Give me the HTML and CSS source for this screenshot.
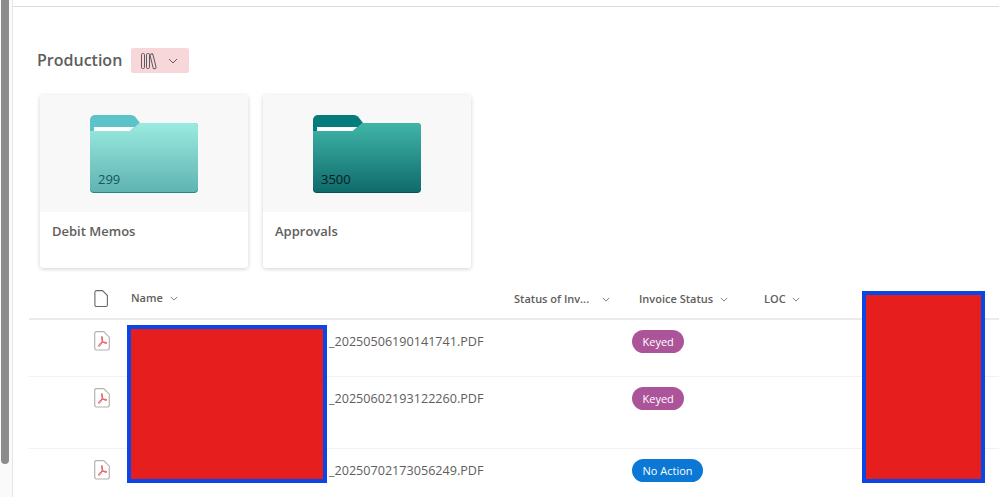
FILE: index.html
```html
<!DOCTYPE html>
<html lang="en">
<head>
    <meta charset="UTF-8">
    <meta name="viewport" content="width=device-width, initial-scale=1.0">
    <title>Production</title>
    <link rel="stylesheet" href="styles.css">
</head>
<body>
    <div class="scrollbar"><div class="scroll-thumb"></div></div>

    <div class="page">
        <div class="section-title">
            <h1>Production</h1>
            <button class="library-button">
                <svg width="18" height="18" viewBox="0 0 18 18" fill="none" stroke="#5f5b5e" stroke-width="1">
                    <rect x="1.5" y="1.5" width="3" height="15" rx="1.2"/>
                    <rect x="6.5" y="1.5" width="3" height="15" rx="1.2"/>
                    <rect x="11.5" y="1.8" width="3" height="15" rx="1.2" transform="rotate(-14 13 9)"/>
                </svg>
                <svg class="chevron" width="10" height="6" viewBox="0 0 10 6"><path d="M1 1l4 4 4-4"/></svg>
            </button>
        </div>

        <div class="cards">
            <div class="card">
                <div class="card-thumb">
                    <div class="folder folder-light">
                        <svg width="108" height="78" viewBox="0 0 108 78">
                            <defs>
                                <linearGradient id="light" x1="0" y1="0" x2="0" y2="1">
                                    <stop offset="0" stop-color="#9aebe0"/>
                                    <stop offset="1" stop-color="#5fb3b1"/>
                                </linearGradient>
                            </defs>
                            <path d="M0 17V5a5 5 0 0 1 5-5h36a6 6 0 0 1 4 1.600L50 8v9z" fill="#5cc4c8"/>
                            <rect x="4" y="12" width="44" height="8" fill="#fff"/>
                            <path d="M0 16h40l9-8h55a4 4 0 0 1 4 4v62a4 4 0 0 1-4 4H4a4 4 0 0 1-4-4z" fill="#1f8a8a"/>
                            <path d="M0 16h40l9-8h55a4 4 0 0 1 4 4v61a4 4 0 0 1-4 4H4a4 4 0 0 1-4-4z" fill="url(#light)"/>
                        </svg>
                        <span class="folder-count">299</span>
                    </div>
                </div>
                <div class="card-name">Debit Memos</div>
            </div>

            <div class="card">
                <div class="card-thumb">
                    <div class="folder folder-dark">
                        <svg width="108" height="78" viewBox="0 0 108 78">
                            <defs>
                                <linearGradient id="dark" x1="0" y1="0" x2="0" y2="1">
                                    <stop offset="0" stop-color="#40b5a8"/>
                                    <stop offset="1" stop-color="#0f6b6b"/>
                                </linearGradient>
                            </defs>
                            <path d="M0 17V5a5 5 0 0 1 5-5h36a6 6 0 0 1 4 1.600L50 8v9z" fill="#047c7c"/>
                            <rect x="4" y="12" width="44" height="8" fill="#fff"/>
                            <path d="M0 16h40l9-8h55a4 4 0 0 1 4 4v62a4 4 0 0 1-4 4H4a4 4 0 0 1-4-4z" fill="#0a4f4f"/>
                            <path d="M0 16h40l9-8h55a4 4 0 0 1 4 4v61a4 4 0 0 1-4 4H4a4 4 0 0 1-4-4z" fill="url(#dark)"/>
                        </svg>
                        <span class="folder-count">3500</span>
                    </div>
                </div>
                <div class="card-name">Approvals</div>
            </div>
        </div>

        <div class="list">
            <div class="list-row list-header">
                <div class="col-icon">
                    <svg class="file-icon" width="14" height="17" viewBox="0 0 14 17" fill="none" stroke="#6b6669" stroke-width="1.1">
                        <path d="M2.500 .6h6l4.900 4.900v9.400a1.600 1.600 0 0 1-1.600 1.600H2.500A1.600 1.600 0 0 1 .9 14.900V2.200A1.600 1.600 0 0 1 2.500 .6z"/>
                    </svg>
                </div>
                <div class="col-name">Name <svg class="chevron" width="8" height="5" viewBox="0 0 10 6"><path d="M1 1l4 4 4-4"/></svg></div>
                <div class="col-status">Status of Inv... <svg class="chevron chevron-far" width="8" height="5" viewBox="0 0 10 6"><path d="M1 1l4 4 4-4"/></svg></div>
                <div class="col-invoice">Invoice Status <svg class="chevron" width="8" height="5" viewBox="0 0 10 6"><path d="M1 1l4 4 4-4"/></svg></div>
                <div class="col-loc">LOC <svg class="chevron" width="8" height="5" viewBox="0 0 10 6"><path d="M1 1l4 4 4-4"/></svg></div>
            </div>

            <div class="list-row file-row row-short">
                <div class="col-icon"><svg class="pdf-icon" width="16" height="20" viewBox="0 0 16 20"><use href="#pdf"/></svg></div>
                <div class="col-name"><span class="file-prefix"></span>_20250506190141741.PDF</div>
                <div class="col-status"></div>
                <div class="col-invoice"><span class="pill pill-keyed">Keyed</span></div>
                <div class="col-loc"></div>
            </div>

            <div class="list-row file-row row-tall">
                <div class="col-icon"><svg class="pdf-icon" width="16" height="20" viewBox="0 0 16 20"><use href="#pdf"/></svg></div>
                <div class="col-name"><span class="file-prefix"></span>_20250602193122260.PDF</div>
                <div class="col-status"></div>
                <div class="col-invoice"><span class="pill pill-keyed">Keyed</span></div>
                <div class="col-loc"></div>
            </div>

            <div class="list-row file-row row-last">
                <div class="col-icon"><svg class="pdf-icon" width="16" height="20" viewBox="0 0 16 20"><use href="#pdf"/></svg></div>
                <div class="col-name"><span class="file-prefix"></span>_20250702173056249.PDF</div>
                <div class="col-status"></div>
                <div class="col-invoice"><span class="pill pill-action">No Action</span></div>
                <div class="col-loc"></div>
            </div>
        </div>
    </div>

    <!-- redaction boxes painted over the screenshot -->
    <div class="redact redact-name"></div>
    <div class="redact redact-col"></div>

    <svg class="icon-defs" width="0" height="0">
        <symbol id="pdf" viewBox="0 0 16 20">
            <path d="M2.200 .7h7.600l5.500 5.500v10.900a1.900 1.900 0 0 1-1.900 1.900H2.200A1.900 1.900 0 0 1 .7 17.100V2.600A1.900 1.900 0 0 1 2.200 .7z" fill="#fff" stroke="#b5b2b0" stroke-width="1.2"/>
            <path d="M8 5.500c-.9 0 0 3.200 1 5 1 1.500 3.500 2.600 3.800 1.500.3-1-2.800-1-5.300-.2-1.800.6-3.500 2.800-2.800 3.500.8.700 2.200-1.800 3-3.800.5-1.500 1-6 .3-6z" fill="none" stroke="#e8494f" stroke-width="1"/>
        </symbol>
    </svg>
</body>
</html>
```

FILE: styles.css
```css
* {
    margin: 0;
    padding: 0;
    box-sizing: border-box;
    font-family: "Open Sans", "Noto Sans", sans-serif;
}

html, body {
    height: 497px;
    overflow: hidden;
}

body {
    background: white;
    display: flex;
}

.scrollbar {
    width: 13px;
    flex-shrink: 0;
    padding-left: 1px;
    background: #fafafa;
    border-right: 1px solid #e6e6e6;
}

.scroll-thumb {
    width: 8px;
    height: 464px;
    border-radius: 0 0 4px 4px;
    background: #8b8b8b;
}

.page {
    flex: 1;
    min-width: 0;
    margin-top: 6px;
    border-top: 1px solid #dcdcdc;
}

.section-title {
    display: flex;
    align-items: center;
    gap: 9px;
    margin: 41px 0 22px 24px;
}

.section-title h1 {
    font-size: 16px;
    font-weight: 600;
    color: #605e5c;
    line-height: 23px;
}

.library-button {
    display: flex;
    align-items: center;
    gap: 10px;
    width: 58px;
    height: 25px;
    padding-left: 9px;
    border: none;
    border-radius: 2px;
    background: #f8d7da;
}

.chevron {
    fill: none;
    stroke: #605e5c;
    stroke-width: 1;
}

.cards {
    display: flex;
    gap: 15px;
    margin-left: 27px;
}

.card {
    width: 208px;
    height: 173px;
    border-radius: 3px;
    background: white;
    box-shadow: 0 1px 4px rgba(0,0,0,0.18);
    overflow: hidden;
}

.card-thumb {
    display: flex;
    justify-content: center;
    height: 117px;
    padding-top: 20px;
    background: #f8f8f8;
}

.folder {
    position: relative;
    width: 108px;
    height: 78px;
}

.folder-count {
    position: absolute;
    left: 8px;
    bottom: 6px;
    font-size: 13px;
    line-height: 16px;
}

.folder-light .folder-count {
    color: #15575c;
}

.folder-dark .folder-count {
    color: #04201f;
}

.card-name {
    padding: 10px 12px;
    font-size: 13px;
    font-weight: 600;
    line-height: 18px;
    color: #605e5c;
}

.list {
    margin: 12px 0 0 16px;
}

.list-row {
    display: flex;
    font-size: 12.6px;
    color: #605e5c;
}

.list-header {
    height: 40px;
    padding-bottom: 2px;
    align-items: center;
    font-size: 11px;
    font-weight: 600;
    border-bottom: 2px solid #ebebeb;
}

.file-row {
    padding-top: 11px;
    border-bottom: 1px solid #f2f2f2;
}

.row-short {
    height: 57px;
}

.row-tall {
    height: 72px;
}

.row-last {
    height: 48px;
    border-bottom: none;
}

.col-icon {
    width: 102px;
    padding-left: 65px;
    flex-shrink: 0;
}

.col-name {
    width: 383px;
    flex-shrink: 0;
    line-height: 22px;
}

.col-status {
    width: 125px;
    flex-shrink: 0;
}

.col-invoice {
    width: 125px;
    flex-shrink: 0;
}

.col-loc {
    flex: 1;
}

.list-header .chevron {
    margin-left: 4px;
    vertical-align: 1px;
}

.list-header .chevron-far {
    margin-left: 10px;
}

.file-icon {
    display: block;
}

.file-prefix {
    display: inline-block;
    width: 198px;
}

.pdf-icon {
    display: block;
}

.pill {
    display: block;
    width: fit-content;
    height: 23px;
    margin: -1px 0 0 -7px;
    padding: 0 10.5px;
    border-radius: 12px;
    font-size: 11px;
    line-height: 23px;
    color: white;
}

.pill-keyed {
    background: #ab5499;
}

.pill-action {
    background: #0a78d4;
}

.redact {
    position: absolute;
    border: 4px solid #0a46e6;
    background: #e61e1e;
}

.redact-name {
    left: 127px;
    top: 325px;
    width: 200px;
    height: 158px;
}

.redact-col {
    left: 862px;
    top: 291px;
    width: 123px;
    height: 192px;
}

.icon-defs {
    position: absolute;
}
```
